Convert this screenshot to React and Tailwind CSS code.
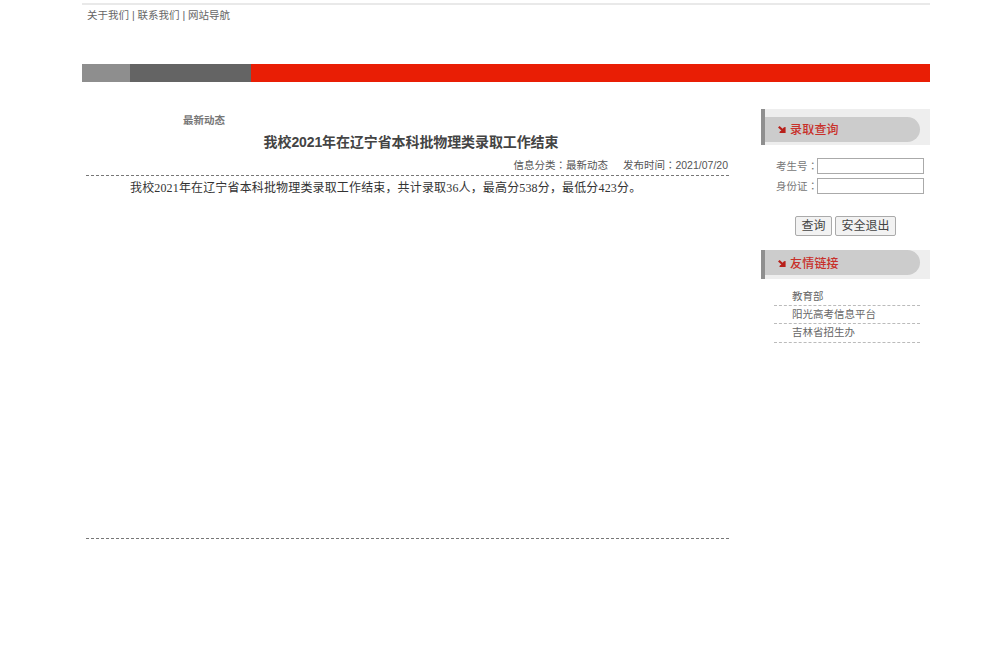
function SideHead({ title, tall }) {
  return (
    <div className={`relative flex bg-[#eeeeee] ${tall ? 'h-[36px]' : 'h-[29px]'}`}>
      <div className="absolute left-0 top-0 bottom-0 w-[4px] bg-[#8f8f8f]" />
      <div className={`ml-[3px] flex items-center w-[156px] h-[25px] rounded-r-[13px] bg-[#cccccc] pl-[14px] ${tall ? 'mt-[8px]' : 'mt-0 pt-[2px]'}`}>
        <svg width="8" height="8" viewBox="0 0 8 8" className="mr-[4px] mt-[1px]">
          <path d="M0 1.5 L1.6 0 L4.6 2.8 L6 1.2 L7.6 1 L7.6 7 L1.4 7 L1.8 5.4 L3.4 4.6 Z" fill="#b8201a" />
        </svg>
        <span className="text-[12px] font-medium text-[#c8302a] tracking-[0.2px]">{title}</span>
      </div>
    </div>
  );
}

const Colon = () => <span className="font-['Noto_Sans_CJK_TC']">：</span>;

export default function App() {
  return (
    <div className="min-h-[652px] bg-white pl-[82px] pr-[70px] text-[#555555] text-[10.5px] font-['Liberation_Sans','Noto_Sans_CJK_SC',sans-serif]">
      <div className="pt-[3px]">
        <div className="h-[2px] bg-[#e9e9e9]" />
        <div className="pl-[5px] pt-[3px] h-[59px] leading-[14px] text-[#666666]">关于我们 | 联系我们 | 网站导航</div>
        <div className="flex h-[18px]">
          <div className="w-[48px] bg-[#8e8e8e]" />
          <div className="w-[121px] bg-[#646464]" />
          <div className="flex-1 bg-[#e91e05]" />
        </div>
      </div>

      <div className="flex pt-[27px]">
        <div className="w-[647px] pl-[4px]">
          <div className="pl-[97px] h-[22px] leading-[22px] font-bold text-[#777777]">最新动态</div>
          <div className="text-center h-[21px] pt-[1px] leading-[21px] text-[14px] font-bold text-[#444444] ml-[7px] tracking-[-0.1px]">我校2021年在辽宁省本科批物理类录取工作结束</div>
          <div className="flex justify-end gap-[15px] h-[24px] pt-[5px] leading-[16px] pr-[1px] text-[#555555] border-b border-dashed border-[#777777]">
            <span>信息分类<Colon />最新动态</span>
            <span>发布时间<Colon />2021/07/20</span>
          </div>
          <div className="h-[363px] pl-[44px] pt-[3px] leading-[18px] text-[12px] text-[#333333] tracking-[0.15px] border-b border-dashed border-[#777777] -mb-px">
            我校<span className="font-['Liberation_Serif']">2021</span>年在辽宁省本科批物理类录取工作结束，共计录取<span className="font-['Liberation_Serif']">36</span>人，最高分<span className="font-['Liberation_Serif']">538</span>分，最低分<span className="font-['Liberation_Serif']">423</span>分。
          </div>
        </div>

        <div className="ml-[32px] flex-1">
          <SideHead title="录取查询" tall />
          <div className="pt-[13px] text-[#777777]">
            <div className="flex items-center h-[16px] pl-[15px]">
              <span className="w-[41px] whitespace-nowrap">考生号<Colon /></span>
              <input className="w-[107px] h-[16px] border border-[#aaaaaa] bg-white" />
            </div>
            <div className="flex items-center h-[16px] mt-[4px] pl-[15px]">
              <span className="w-[41px] whitespace-nowrap">身份证<Colon /></span>
              <input className="w-[107px] h-[16px] border border-[#aaaaaa] bg-white" />
            </div>
          </div>
          <div className="flex gap-[3px] pl-[34px] pt-[22px]">
            <button className="w-[37px] h-[20px] border border-[#aaaaaa] rounded-[2px] bg-[#f2f2f2] text-[12px] text-[#444444]">查询</button>
            <button className="w-[61px] h-[20px] border border-[#aaaaaa] rounded-[2px] bg-[#f2f2f2] text-[12px] text-[#444444]">安全退出</button>
          </div>
          <div className="mt-[14px]"><SideHead title="友情链接" /></div>
          <ul className="ml-[13px] w-[146px] mt-[9px] text-[#666666]">
            <li className="h-[18px] pl-[18px] leading-[17px] border-b border-dashed border-[#bbbbbb]">教育部</li>
            <li className="h-[18px] pl-[18px] leading-[17px] border-b border-dashed border-[#bbbbbb]">阳光高考信息平台</li>
            <li className="h-[19px] pl-[18px] leading-[17px] border-b border-dashed border-[#bbbbbb]">吉林省招生办</li>
          </ul>
        </div>
      </div>
    </div>
  );
}
